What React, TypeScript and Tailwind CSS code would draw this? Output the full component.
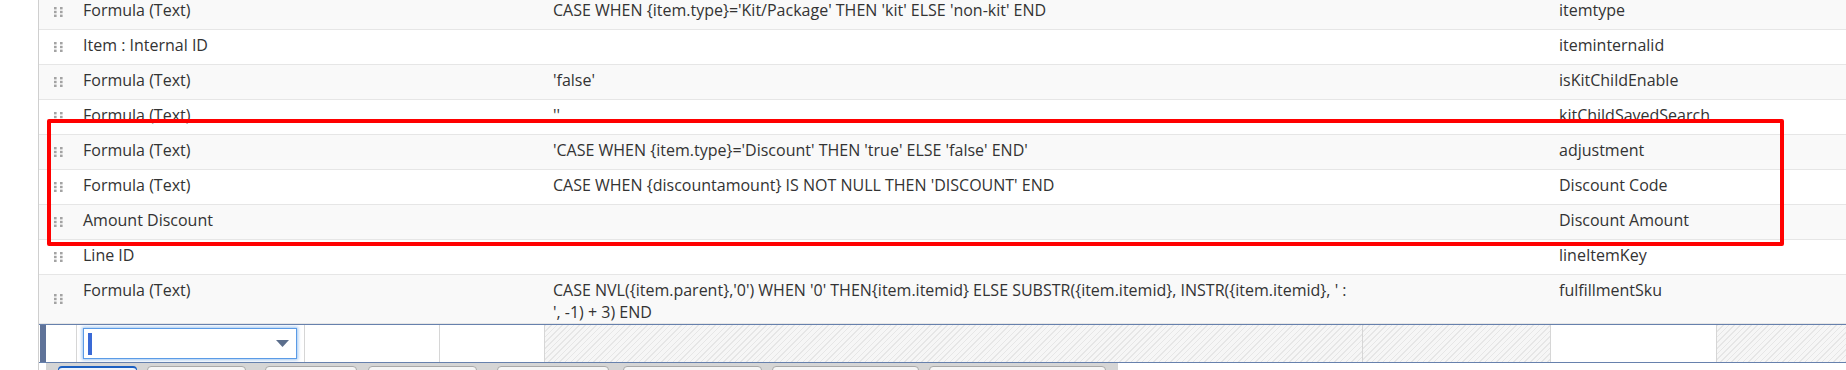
import React from 'react'

interface ResultRow {
  field: string
  formula: string[]
  label: string
}

const rows: ResultRow[] = [
  { field: 'Formula (Text)', formula: ["CASE WHEN {item.type}='Kit/Package' THEN 'kit' ELSE 'non-kit' END"], label: 'itemtype' },
  { field: 'Item : Internal ID', formula: [], label: 'iteminternalid' },
  { field: 'Formula (Text)', formula: ["'false'"], label: 'isKitChildEnable' },
  { field: 'Formula (Text)', formula: ["''"], label: 'kitChildSavedSearch' },
  { field: 'Formula (Text)', formula: ["'CASE WHEN {item.type}='Discount' THEN 'true' ELSE 'false' END'"], label: 'adjustment' },
  { field: 'Formula (Text)', formula: ["CASE WHEN {discountamount} IS NOT NULL THEN 'DISCOUNT' END"], label: 'Discount Code' },
  { field: 'Amount Discount', formula: [], label: 'Discount Amount' },
  { field: 'Line ID', formula: [], label: 'lineItemKey' },
  {
    field: 'Formula (Text)',
    formula: [
      "CASE NVL({item.parent},'0') WHEN '0' THEN{item.itemid} ELSE SUBSTR({item.itemid}, INSTR({item.itemid}, ' :",
      "', -1) + 3) END",
    ],
    label: 'fulfillmentSku',
  },
]

const tabs = [
  { width: 'w-[79px]', gap: 'ml-[12px]', active: true },
  { width: 'w-[99px]', gap: 'ml-[10px]' },
  { width: 'w-[92px]', gap: 'ml-[19px]' },
  { width: 'w-[109px]', gap: 'ml-[11px]' },
  { width: 'w-[112px]', gap: 'ml-[20px]' },
  { width: 'w-[139px]', gap: 'ml-[14px]' },
  { width: 'w-[147px]', gap: 'ml-[10px]' },
  { width: 'w-[177px]', gap: 'ml-[10px]' },
]

const cols = 'grid grid-cols-[38px_228px_135px_105px_818px_188px_166px_1fr]'
// striped fill for the read-only cells of the entry row
const hatch = 'bg-[repeating-linear-gradient(135deg,#e6e6e6_0px,#e6e6e6_1px,#f6f6f6_1px,#f6f6f6_4px)]'

function DragHandle() {
  return (
    <svg width="9" height="10" viewBox="0 0 9 10" className="block">
      {[0, 3.8, 7.6].map(y => (
        <g key={y} fill="#a3a3a3">
          <rect x="0" y={y} width="2.6" height="2.4" />
          <rect x="6" y={y} width="2.6" height="2.4" />
        </g>
      ))}
    </svg>
  )
}

function DataRow({ row, striped }: { row: ResultRow; striped: boolean }) {
  return (
    <div className={`${cols} min-h-[35px] border-b border-[#e6e6e6] ${striped ? 'bg-[#f9f9f9]' : 'bg-white'}`}>
      <div className="flex items-center justify-center">
        <DragHandle />
      </div>
      <div className="pl-[6px] pt-[5px] whitespace-nowrap">{row.field}</div>
      <div />
      <div />
      <div className="px-[8px] pt-[5px]">
        {row.formula.map((line, i) => (
          <div key={i} className="whitespace-nowrap">{line}</div>
        ))}
      </div>
      <div />
      <div className="pl-[8px] pt-[5px] whitespace-nowrap">{row.label}</div>
      <div />
    </div>
  )
}

function EntryRow() {
  return (
    <div className={`${cols} h-[39px] border-y border-[#6781ad] bg-white`}>
      <div className="flex border-r border-[#d6d6d6]">
        <div className="ml-[1px] w-[6px] bg-[#5f7399]" />
      </div>
      <div className="flex items-center pl-[6px] border-r border-[#d6d6d6]">
        <div className="flex h-[31px] w-[214px] items-center justify-between border border-[#5b9be6] bg-white pl-[4px] pr-[7px] shadow-[0_0_3px_1px_rgba(80,150,230,0.55)]">
          <span className="h-[22px] w-[4px] bg-[#3a6ad6]" />
          <svg width="13" height="7" viewBox="0 0 13 7">
            <polygon points="0,0 13,0 6.5,7" fill="#5b6e8c" />
          </svg>
        </div>
      </div>
      <div className="border-r border-[#d6d6d6]" />
      <div className="border-r border-[#d6d6d6]" />
      <div className={`border-r border-[#d6d6d6] ${hatch}`} />
      <div className={`border-r border-[#d6d6d6] ${hatch}`} />
      <div className="border-r border-[#d6d6d6]" />
      <div className={hatch} />
    </div>
  )
}

export default function App() {
  return (
    <div className="relative flex flex-col w-[1846px] h-[370px] overflow-hidden bg-white font-['Open_Sans',sans-serif] text-[16px] leading-[21.6px] text-[#333333]">
      <div className="-mt-[5px] ml-[38px] flex flex-col border-l border-[#cfcfcf]">
        {rows.map((row, i) => (
          <DataRow key={i} row={row} striped={i % 2 === 0} />
        ))}
        <EntryRow />
        <div className="ml-[7px] flex h-[8px] w-[1072px] overflow-hidden bg-[#d5d5d5]">
          {tabs.map((tab, i) => (
            <div
              key={i}
              className={`${tab.gap} ${tab.width} mt-[3px] h-[12px] shrink-0 rounded-t-[4px] border ${
                tab.active ? 'border-[#1b5fc1] border-t-2 bg-[#eef3fb]' : 'border-[#a9a9a9] bg-[#f5f5f5]'
              }`}
            />
          ))}
        </div>
      </div>

      <div className="pointer-events-none absolute left-[47px] top-[119px] h-[127px] w-[1737px] rounded-[2px] border-4 border-[#ff0000]" />
    </div>
  )
}
